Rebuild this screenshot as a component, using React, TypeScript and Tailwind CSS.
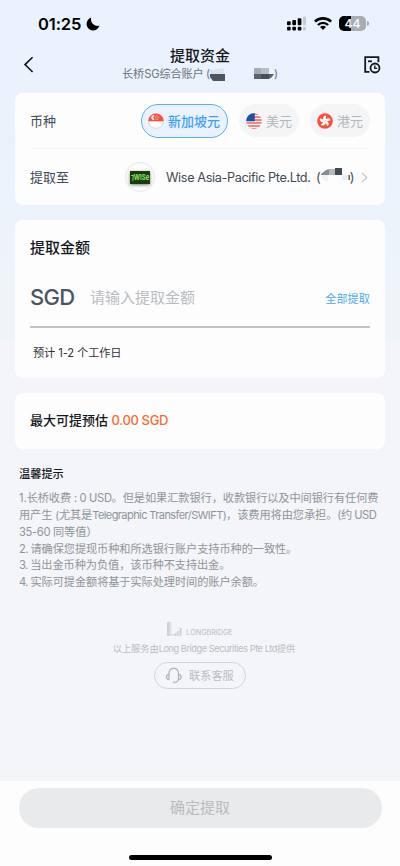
import type { ReactNode } from "react";

function StatusBar() {
  return (
    <div className="flex h-[46px] items-start justify-between pl-[38px] pr-[31px]">
      <div className="flex items-center pt-[14px]">
        <span className="w-[44px] text-[16.5px] leading-5 font-semibold tracking-[-0.1px] text-black">01:25</span>
        <svg className="ml-[4px] h-[14px] w-[14px]" viewBox="0 0 14 14">
          <path d="M5.2 0.5C4.1 4.8 7.4 9.6 13.4 8.8C12.4 11.8 9.8 13.5 7 13.5C3.4 13.5 0.6 10.7 0.6 7.1C0.6 4 2.4 1.4 5.2 0.5Z" fill="#000" />
        </svg>
      </div>
      <div className="flex items-center pt-[16px]">
        <svg className="h-[15px] w-[21px]" viewBox="0 0 21 15">
          <g fill="#000">
            <rect x="2" y="5.2" width="3.7" height="4" rx="1" />
            <rect x="7.3" y="3.9" width="3.7" height="5.3" rx="1" />
            <rect x="12.7" y="2.2" width="3.7" height="7" rx="1" />
            <rect x="2" y="10.8" width="3.7" height="3.7" rx="1" />
            <rect x="7.3" y="10.8" width="3.7" height="3.7" rx="1" />
            <rect x="12.7" y="10.8" width="3.7" height="3.7" rx="1" />
          </g>
          <g fill="#c3c9d0">
            <rect x="18" y="0.5" width="3" height="8.7" rx="1" />
            <rect x="18" y="11" width="3" height="3.4" rx="1" />
          </g>
        </svg>
        <svg className="ml-[8px] h-[13px] w-[18px]" viewBox="0 0 18 13">
          <path d="M0.9 4.7C5.2 0.2 12.8 0.2 17.1 4.7" fill="none" stroke="#000" strokeWidth="2.6" />
          <path d="M3.9 8C6.7 5.1 11.3 5.1 14.1 8" fill="none" stroke="#000" strokeWidth="2.4" />
          <path d="M9 12.9L6 9.9C7.7 8.5 10.3 8.5 12 9.9Z" fill="#000" />
        </svg>
        <div className="ml-[7px] flex h-[15px] w-[27px] items-center justify-center rounded-[5px] bg-[linear-gradient(90deg,#000_44%,#a7adb4_44%)] text-[12px] leading-none font-semibold text-[#f4f7fb]">
          44
        </div>
        <div className="ml-px h-[5px] w-[2px] rounded-r-full bg-[#a7adb4]" />
      </div>
    </div>
  );
}

function Header() {
  return (
    <header className="flex h-[47px] items-start justify-between pl-[23px] pr-[19px]">
      <svg className="mt-[10px] h-[17px] w-[11px]" viewBox="0 0 11 17">
        <path d="M9.6 1.2L2 8.6L9.6 16" fill="none" stroke="#111" strokeWidth="1.6" />
      </svg>
      <div className="flex flex-col items-center pl-[2px]">
        <h1 className="text-[15px] leading-[20px] font-medium text-[#15181c]">提取资金</h1>
        <div className="flex h-[17px] w-[156px] items-center text-[11.2px] whitespace-nowrap text-[#6a737c]">
          <span className="w-[88px] tracking-[-0.12px]">
            长桥SG综合账户<span className="tracking-[-0.8px]"> (</span>
          </span>
          <svg className="h-[14px] w-[64px]" viewBox="0 0 64 14">
            <path d="M0 2L14 0V6H0Z" fill="#dbe3ed" />
            <path d="M0 6H15V13H3L0 9Z" fill="#4c5560" />
            <path d="M44 0H59V6H44Z" fill="#a3abb5" />
            <path d="M51 0H59V6H51Z" fill="#b7bec8" />
            <path d="M44 6H64L62 9L59 11H44Z" fill="#59626d" />
            <path d="M51 6H59V11H51Z" fill="#464f5b" />
          </svg>
          <span>)</span>
        </div>
      </div>
      <svg className="mt-[10px] h-[18px] w-[17px]" viewBox="0 0 17 18" fill="none" stroke="#15181c" strokeWidth="1.8">
        <path d="M5.5 15.8H1.2V1.2H14.4V6.2" />
        <path d="M4 5.3H8" />
        <circle cx="11" cy="12" r="4.5" />
        <path d="M10.8 9.6V12.4H13.2" strokeWidth="1.4" />
      </svg>
    </header>
  );
}

function SingaporeFlag() {
  return (
    <svg className="h-4 w-4" viewBox="0 0 16 16">
      <circle cx="8" cy="8" r="7.4" fill="#fdfdfd" stroke="#d6d6d6" strokeWidth="0.9" />
      <path d="M0.2 8.2A7.8 7.8 0 0 1 15.8 8.2Z" fill="#fb4f3c" />
      <path d="M6.5 2.2A2.5 2.5 0 1 0 6.5 7A3.2 3.2 0 0 1 6.5 2.2Z" fill="#fff" />
      <g fill="#fff">
        <circle cx="8.8" cy="2.8" r="0.5" />
        <circle cx="7.4" cy="4.1" r="0.5" />
        <circle cx="10.2" cy="4.1" r="0.5" />
        <circle cx="8" cy="6" r="0.5" />
        <circle cx="9.7" cy="6" r="0.5" />
      </g>
    </svg>
  );
}

function UsaFlag() {
  return (
    <svg className="h-4 w-4" viewBox="0 0 16 16">
      <clipPath id="usa">
        <circle cx="8" cy="8" r="7.8" />
      </clipPath>
      <g clipPath="url(#usa)">
        <rect width="16" height="16" fill="#fff" />
        <path d="M0 1H16M0 4H16M0 7H16M0 10H16M0 13H16M0 15.7H16" stroke="#fb5a48" strokeWidth="1.6" />
        <rect width="8.8" height="8.3" fill="#1552ad" />
      </g>
    </svg>
  );
}

function HongKongFlag() {
  return (
    <svg className="h-4 w-4" viewBox="0 0 16 16">
      <circle cx="8" cy="8" r="7.8" fill="#fb4f3c" />
      <g fill="#fff">
        {[0, 72, 144, 216, 288].map((angle) => (
          <path key={angle} d="M8 7.8C5.6 6.8 5.4 3.2 8.4 2.4C10 2.9 8.2 4.4 9 5.6C9.2 6.6 8.6 7.4 8 7.8Z" transform={`rotate(${angle} 8 8)`} />
        ))}
      </g>
    </svg>
  );
}

function CurrencyPill({ icon, label, selected }: { icon: ReactNode; label: string; selected?: boolean }) {
  return (
    <button
      className={
        selected
          ? "flex h-[34px] w-[87px] items-center gap-[4px] rounded-full border border-[#57aefb] bg-[#eaf3fd] pl-[6px] text-[13px] font-medium whitespace-nowrap text-[#3da0f8]"
          : "flex h-[33px] w-[60px] items-center gap-[4px] rounded-full bg-[#f4f5f7] pl-[7px] text-[13px] whitespace-nowrap text-[#b4b7bb]"
      }
    >
      {icon}
      <span className="pt-[2px]">{label}</span>
    </button>
  );
}

function AccountCard() {
  return (
    <section className="h-[112px] rounded-[8px] bg-[#fdfdfe] px-[15px]">
      <div className="flex h-[56px] items-center justify-between border-b border-[#f5f5f6] text-[13px] text-[#414b55]">
        <span className="pt-[2px]">币种</span>
        <div className="flex items-center gap-[11px]">
          <CurrencyPill icon={<SingaporeFlag />} label="新加坡元" selected />
          <CurrencyPill icon={<UsaFlag />} label="美元" />
          <CurrencyPill icon={<HongKongFlag />} label="港元" />
        </div>
      </div>
      <div className="flex h-[56px] items-center text-[13px] text-[#414b55]">
        <span className="w-[95px] pt-[2px]">提取至</span>
        <div className="flex h-[30px] w-[30px] shrink-0 items-center justify-center rounded-full border border-[#e4e6e9]">
          <div className="flex h-[13px] w-[20px] items-center justify-center bg-[#173d0c] shadow-[0_1px_3px_#777]">
            <span className="scale-x-75 text-[8px] font-bold whitespace-nowrap text-[#8ee868]">⁊WISe</span>
          </div>
        </div>
        <span className="ml-[11px] w-[150px] pt-[2px] tracking-[-0.38px] whitespace-nowrap text-[12.7px]">Wise Asia-Pacific Pte.Ltd.</span>
        <span className="pt-px">(</span>
        <svg className="-mt-[5px] h-[14px] w-[29px]" viewBox="0 0 29 14">
          <path d="M0 6L5 2L9 1V7H0Z" fill="#858c95" />
          <path d="M8 1H15V7H8Z" fill="#b3b8be" />
          <path d="M14 0H21V7H14Z" fill="#3f4953" />
          <path d="M0 7H7V13H3Z" fill="#f0f2f7" />
          <path d="M21 7H28V12H21Z" fill="#eceef0" />
          <path d="M27.5 7H29V12H27.5Z" fill="#59616a" />
        </svg>
        <span className="pt-px">)</span>
        <svg className="mr-[2px] ml-auto h-[11px] w-[7px]" viewBox="0 0 7 11">
          <path d="M1 1L5.8 5.5L1 10" fill="none" stroke="#bfc3c7" strokeWidth="1.1" />
        </svg>
      </div>
    </section>
  );
}

function AmountCard() {
  return (
    <section className="mt-[15px] h-[158px] rounded-[8px] bg-[#fdfdfe] px-[15px] pt-[18px]">
      <h2 className="text-[15px] leading-5 font-medium text-[#15181c]">提取金额</h2>
      <div className="mt-[11px] flex h-[59px] items-center border-b-2 border-[#c1c3c7]">
        <span className="w-[60px] text-[22px] font-medium tracking-[-0.7px] text-[#4b5560]">SGD</span>
        <span className="pt-[2px] text-[15px] text-[#b9bcc1]">请输入提取金额</span>
        <span className="ml-auto pt-[4px] text-[11.2px] text-[#4ca9f8]">全部提取</span>
      </div>
      <p className="mt-[16px] pl-[3px] text-[11.2px] leading-[18px] tracking-[-0.1px] text-[#2d3339]">预计 1-2 个工作日</p>
    </section>
  );
}

function Tips() {
  return (
    <section className="mt-[17px] pl-[4px]">
      <h3 className="text-[11.2px] leading-[17px] font-medium text-[#15181c]">温馨提示</h3>
      <div className="mt-[7px] text-[11.2px] leading-[16.85px] tracking-[-0.07px] whitespace-nowrap text-[#8f949a]">
        <p>
          1.长桥收费<span className="tracking-[-0.35px]"> : 0 USD</span>。但是如果汇款银行，收款银行以及中间银行有任何费
        </p>
        <p>
          用产生<span className="text-[11px] tracking-[-0.3px]"> (</span>尤其是
          <span className="text-[11px] tracking-[-0.58px]">Telegraphic Transfer/SWIFT)</span>，该费用将由您承担。
          <span className="tracking-[-0.5px]">(约 USD</span>
        </p>
        <p>
          <span className="tracking-[-0.35px]">35-60 </span>同等值）
        </p>
        <p>
          <span className="tracking-[-0.6px]">2. </span>请确保您提现币种和所选银行账户支持币种的一致性。
        </p>
        <p>
          <span className="tracking-[-0.6px]">3. </span>当出金币种为负值，该币种不支持出金。
        </p>
        <p>
          <span className="tracking-[-0.6px]">4. </span>实际可提金额将基于实际处理时间的账户余额。
        </p>
      </div>
    </section>
  );
}

function Provider() {
  return (
    <section className="mt-[30px] flex flex-col items-center text-[#b9bdc1]">
      <div className="flex h-[15px] items-end gap-[4px]">
        <svg className="h-[15px] w-[15px]" viewBox="0 0 15 15">
          <path d="M0 1H4V15H0Z" fill="#cdd0d4" />
          <path d="M2.5 1H4.5V13H7V15H2.5Z" fill="#dfe1e5" />
          <path d="M7.5 12H9.5V15H7.5ZM10 10H11.5V15H10ZM12.5 7H14.5V15H12.5Z" fill="#cdd0d4" />
        </svg>
        <span className="text-[7.2px] leading-[7px]">LONGBRIDGE</span>
      </div>
      <p className="mt-[5px] ml-[8px] text-[9.2px] leading-[16px] whitespace-nowrap">
        以上服务由<span className="tracking-[-0.44px]">Long Bridge Securities Pte Ltd</span>提供
      </p>
      <button className="mt-[5px] flex h-[27px] w-[92px] items-center rounded-full border border-[#d0d3d7] pl-[10px] text-[11.2px]">
        <svg className="mr-[6px] h-[17px] w-[18px]" viewBox="0 0 18 17" fill="none" stroke="#b1b5ba" strokeWidth="1.3">
          <path d="M4 12.4V6.5C4 -0.5 13.5 -0.5 13.5 6.5V11C13.5 14 12.5 15.2 10 15.4" />
          <path d="M4 7.3C0.6 7.6 0.6 12.2 4 12.5M13.5 7.3C17 7.6 17 12.2 13.5 12.5" />
          <path d="M8 15.4H9.6" strokeWidth="1.8" />
        </svg>
        <span className="pt-[2px]">联系客服</span>
      </button>
    </section>
  );
}

export default function App() {
  return (
    <div className="flex h-[866px] w-[400px] flex-col overflow-hidden bg-[#f3f5f8] bg-[linear-gradient(180deg,#e9f2fd_0px,#e9f2fd_120px,#eff4f9_340px,#f3f5f8_341px)] font-[Inter,'Noto_Sans_CJK_SC',sans-serif]">
      <StatusBar />
      <Header />
      <main className="px-[15px]">
        <AccountCard />
        <AmountCard />
        <section className="mt-[15px] flex h-[56px] items-center rounded-[8px] bg-[#fdfdfe] px-[15px] text-[13px] font-medium whitespace-pre text-[#15181c]">
          最大可提预估 <span className="tracking-[-0.35px] text-[#fb6a35]">0.00 SGD</span>
        </section>
        <Tips />
        <Provider />
      </main>
      <footer className="mt-auto flex h-[85px] flex-col items-center bg-[#fdfdfd] pt-[7px]">
        <button className="h-[40px] w-[363px] rounded-full bg-[#e9eaeb] pt-px text-[15px] text-[#b9bbbd]">确定提取</button>
        <div className="mt-[27px] h-[5px] w-[143px] rounded-full bg-black" />
      </footer>
    </div>
  );
}
